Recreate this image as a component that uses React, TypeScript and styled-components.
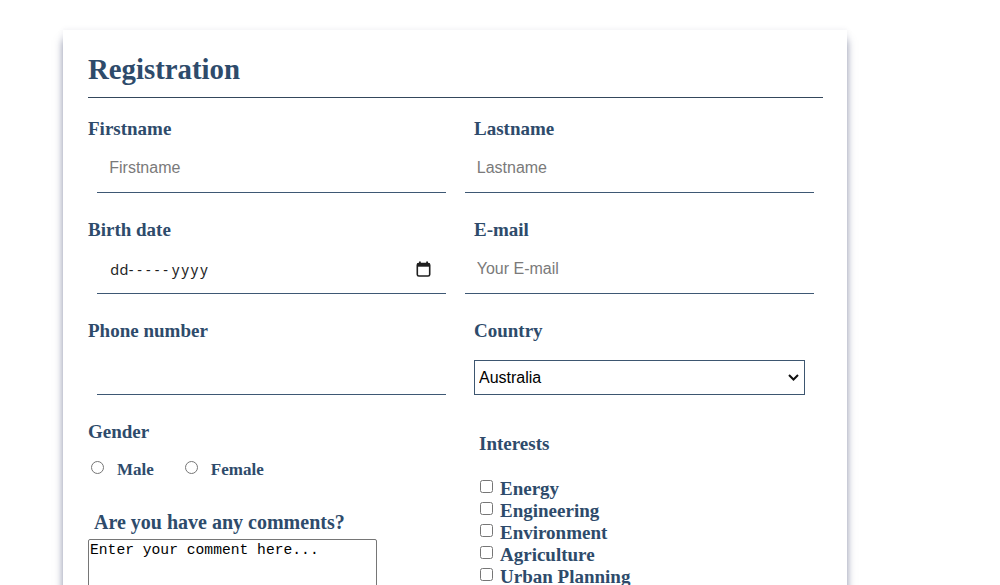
import React from 'react';
import styled, { createGlobalStyle } from 'styled-components';

const Global = createGlobalStyle`
  html, body { margin: 0; padding: 0; background: #ffffff; overflow: hidden; }
  body { font-family: "Liberation Serif", "Times New Roman", serif; }
`;

const ink = '#2e4b6b';
const serif = `"Liberation Serif", "Times New Roman", serif`;
const sans = `"Liberation Sans", Arial, sans-serif`;

const Page = styled.div`
  height: 585px;
  box-sizing: border-box;
  padding: 30px 0 0 63px;
  overflow: hidden;
`;

const Card = styled.div`
  width: 784px;
  min-height: 640px;
  box-sizing: border-box;
  padding: 22px 24px 40px 25px;
  background: #ffffff;
  box-shadow: 0 10px 8px rgba(45, 55, 100, 0.5), 0 0 6px rgba(45, 55, 100, 0.08);
`;

const Title = styled.h1`
  margin: 0;
  font: bold 28.8px/34px ${serif};
  color: ${ink};
`;

const Rule = styled.hr`
  margin: 11px 0 0;
  height: 0;
  border: 0;
  border-top: 1px solid #34475c;
`;

const FormGrid = styled.div`
  display: grid;
  grid-template-columns: 1fr 1fr;
  margin-top: 18.6px;
`;

const Field = styled.div`
  display: flex;
  flex-direction: column;
  margin-bottom: 25px;
`;

const Label = styled.label<{ $indent?: number; $size?: number; $top?: number }>`
  display: block;
  margin-top: ${(p) => p.$top ?? 0}px;
  padding-top: 1px;
  padding-left: ${(p) => p.$indent ?? 0}px;
  font: bold ${(p) => p.$size ?? 19}px/${(p) => (p.$size ?? 19) + 3 + ((p.$size ?? 19) > 19 ? 1 : 0)}px ${serif};
  color: ${ink};
`;

const TextInput = styled.input`
  display: block;
  width: 349px;
  height: 48px;
  margin: 5px auto 0;
  box-sizing: border-box;
  padding: 0 12px;
  border: 0;
  border-bottom: 1px solid #3e5874;
  background: transparent;
  font: 16px ${sans};
  color: #222;
  outline: none;
  &::placeholder { color: #7a7a7a; }
`;

const DateField = styled.div`
  display: flex;
  align-items: center;
  justify-content: space-between;
  width: 349px;
  height: 48px;
  margin: 5px auto 0;
  box-sizing: border-box;
  padding: 0 15px 0 13px;
  border-bottom: 1px solid #3e5874;
  font: 14.5px "Noto Sans", "DejaVu Sans", sans-serif;
  color: #1f1f1f;
`;

const DatePart = styled.span<{ $spacing: number }>`
  letter-spacing: ${(p) => p.$spacing}px;
`;

const SelectBox = styled.div`
  position: relative;
  width: 331px;
  height: 35px;
  margin: 18px 0 0 18.5px;
`;

const Select = styled.select`
  width: 100%;
  height: 100%;
  box-sizing: border-box;
  appearance: none;
  -webkit-appearance: none;
  padding: 0 0 0 4px;
  border: 1px solid #3d5670;
  border-radius: 0;
  background: #fff;
  font: 16px ${sans};
  color: #000;
  outline: none;
`;

const Chevron = styled.svg`
  position: absolute;
  right: 6px;
  top: 50%;
  margin-top: -3px;
  pointer-events: none;
`;

const Block = styled.div<{ $indent?: number }>`
  display: flex;
  flex-direction: column;
  padding-left: ${(p) => p.$indent ?? 0}px;
`;

const RadioRow = styled.div`
  display: flex;
  align-items: center;
  margin-top: 17.7px;
  height: 20px;
`;

const RadioOption = styled.label<{ $gap?: number }>`
  display: flex;
  align-items: center;
  margin-left: ${(p) => p.$gap ?? 0}px;
  font: bold 17px/20px ${serif};
  color: ${ink};
`;

const Radio = styled.input`
  width: 13px;
  height: 13px;
  margin: 0 13px 5px 3px;
`;

const Comment = styled.textarea`
  display: block;
  width: 289px;
  height: 110px;
  margin-top: 4.8px;
  box-sizing: border-box;
  padding: 2px 1px 0;
  border: 1px solid #767676;
  border-radius: 2px;
  resize: none;
  font: 14.67px "Liberation Mono", "Courier New", monospace;
  color: #000;
  background: #fff;
  outline: none;
`;

const CheckList = styled.div`
  display: flex;
  flex-direction: column;
  margin-top: 23px;
`;

const CheckRow = styled.label`
  display: flex;
  align-items: flex-start;
  font: bold 19px/22px ${serif};
  color: ${ink};
`;

const Check = styled.input`
  width: 13px;
  height: 13px;
  margin: 2.6px 7px 0 1px;
`;

const CalendarIcon = () => (
  <svg width="15" height="16" viewBox="0 0 15 16" aria-hidden="true">
    <rect x="3" y="0.5" width="1.8" height="3" fill="#1f1f1f" />
    <rect x="10.2" y="0.5" width="1.8" height="3" fill="#1f1f1f" />
    <rect x="1.3" y="2.5" width="12.4" height="12.5" rx="1.6" fill="none" stroke="#1f1f1f" strokeWidth="1.6" />
    <rect x="1.3" y="2.5" width="12.4" height="3.2" fill="#1f1f1f" />
  </svg>
);

const interests = ['Energy', 'Engineering', 'Environment', 'Agriculture', 'Urban Planning'];

export default function App() {
  return (
    <>
      <Global />
      <Page>
        <Card>
          <Title>Registration</Title>
          <Rule />
          <FormGrid>
            <Field>
              <Label>Firstname</Label>
              <TextInput placeholder="Firstname" />
            </Field>
            <Field>
              <Label $indent={18.5}>Lastname</Label>
              <TextInput placeholder="Lastname" />
            </Field>

            <Field>
              <Label>Birth date</Label>
              <DateField>
                <span>
                  <DatePart $spacing={0.3}>dd</DatePart>
                  <DatePart $spacing={4}>-----</DatePart>
                  <DatePart $spacing={2}>yyyy</DatePart>
                </span>
                <CalendarIcon />
              </DateField>
            </Field>
            <Field>
              <Label $indent={18.5}>E-mail</Label>
              <TextInput type="email" placeholder="Your E-mail" />
            </Field>

            <Field>
              <Label>Phone number</Label>
              <TextInput type="tel" />
            </Field>
            <Field>
              <Label $indent={18.5}>Country</Label>
              <SelectBox>
                <Select defaultValue="Australia">
                  <option>Australia</option>
                  <option>Canada</option>
                  <option>Germany</option>
                  <option>United States</option>
                </Select>
                <Chevron width="11" height="7" viewBox="0 0 11 7">
                  <polyline points="1,1 5.5,5.5 10,1" fill="none" stroke="#111" strokeWidth="2" />
                </Chevron>
              </SelectBox>
            </Field>

            <Block>
              <Label>Gender</Label>
              <RadioRow>
                <RadioOption>
                  <Radio type="radio" name="gender" />
                  Male
                </RadioOption>
                <RadioOption $gap={28}>
                  <Radio type="radio" name="gender" />
                  Female
                </RadioOption>
              </RadioRow>
              <Label $indent={6} $size={20} $top={29}>Are you have any comments?</Label>
              <Comment defaultValue="Enter your comment here..." />
            </Block>
            <Block $indent={23.5}>
              <Label $top={12}>Interests</Label>
              <CheckList>
                {interests.map((name) => (
                  <CheckRow key={name}>
                    <Check type="checkbox" />
                    {name}
                  </CheckRow>
                ))}
              </CheckList>
            </Block>
          </FormGrid>
        </Card>
      </Page>
    </>
  );
}
